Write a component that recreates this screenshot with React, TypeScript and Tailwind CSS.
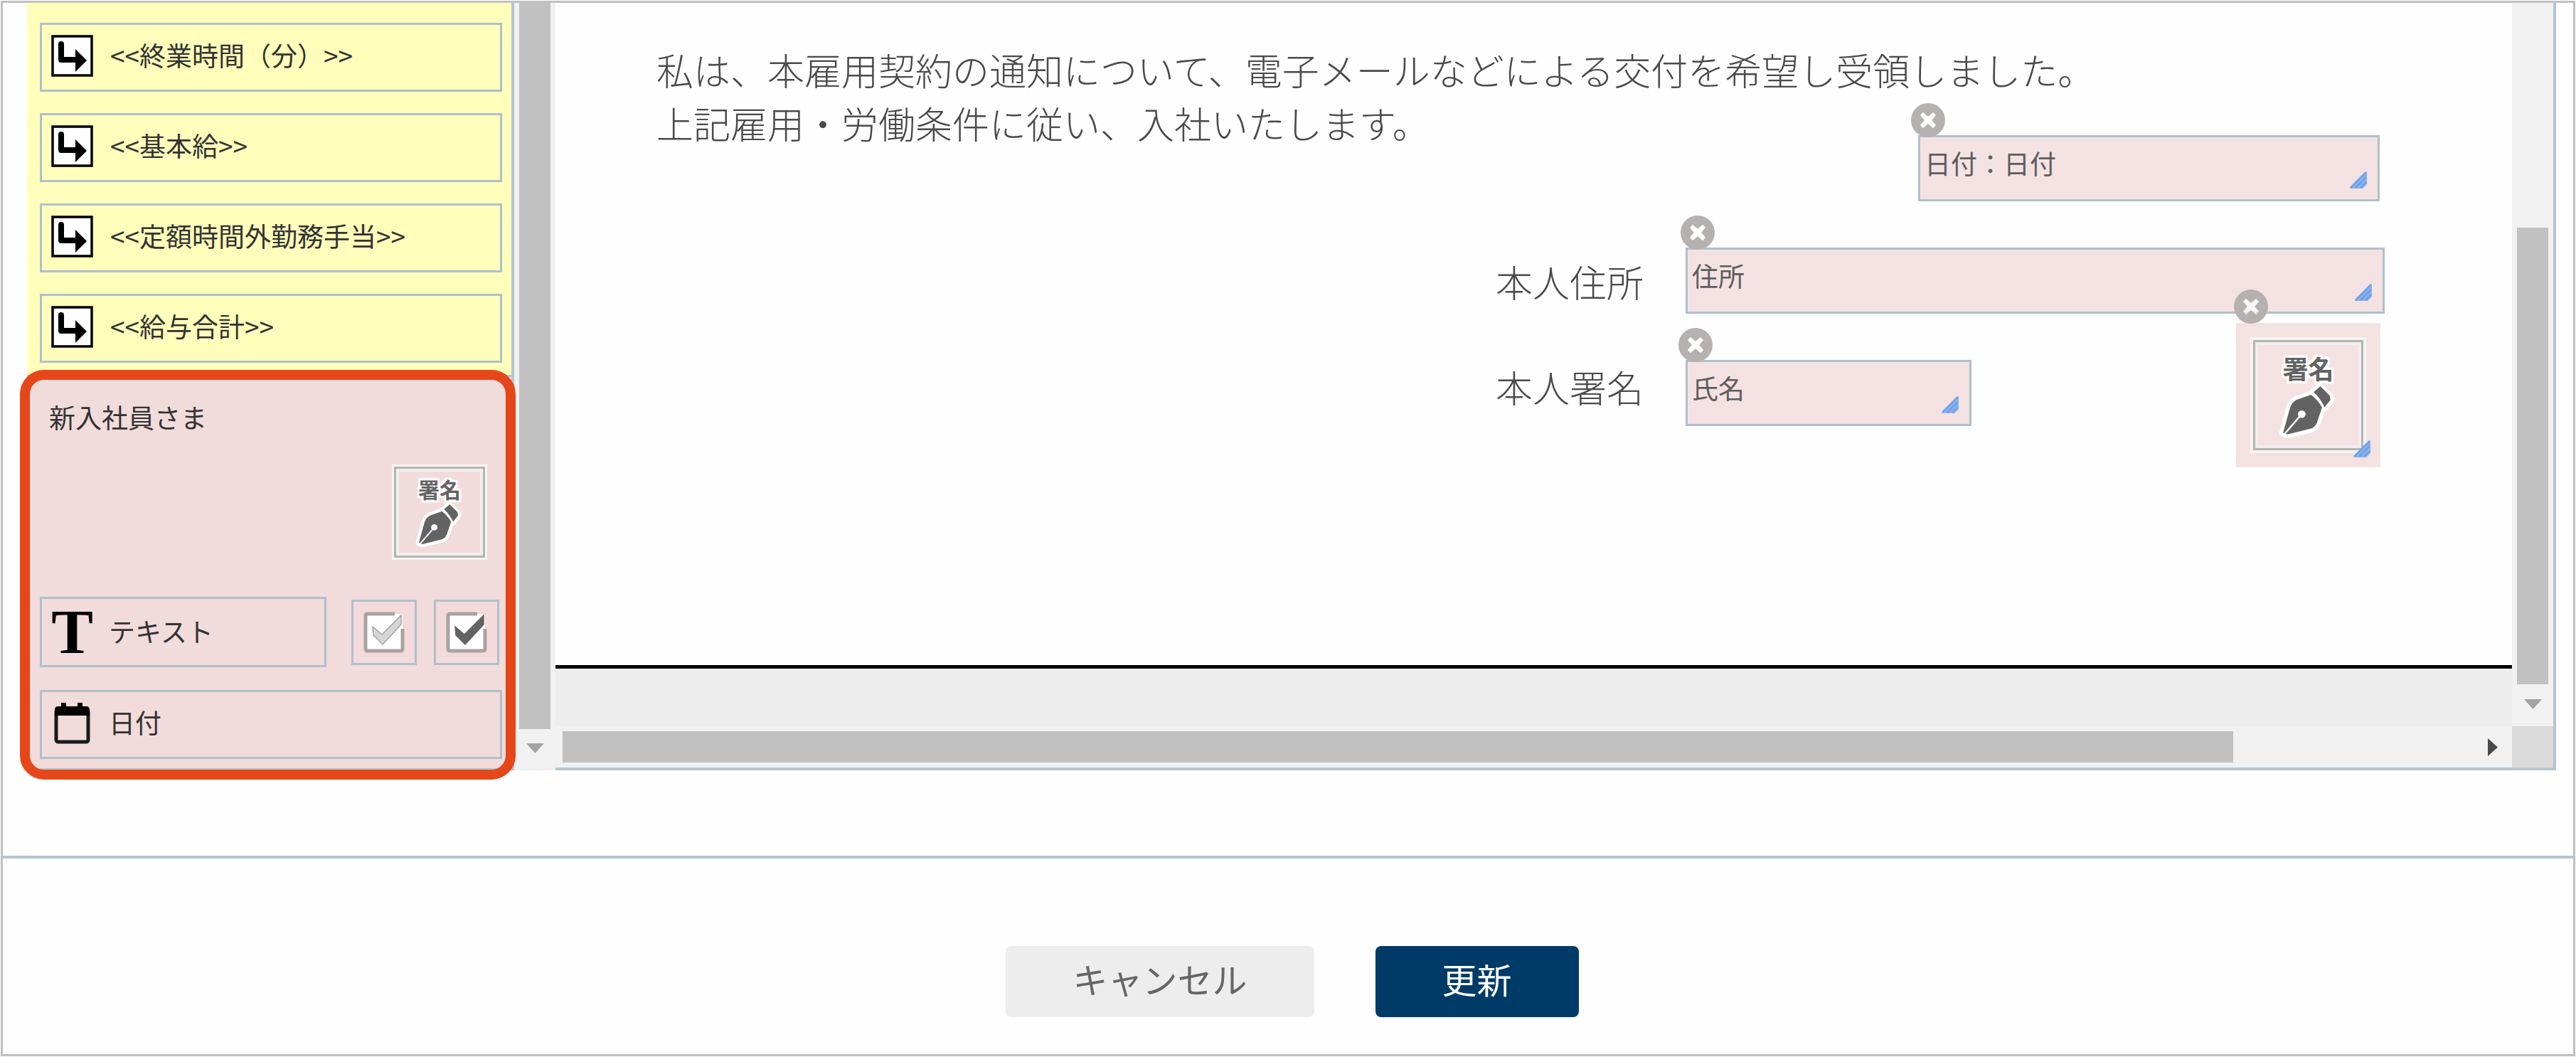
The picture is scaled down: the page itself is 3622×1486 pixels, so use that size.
import React from "react";

const insertFields = [
	"<<終業時間（分）>>",
	"<<基本給>>",
	"<<定額時間外勤務手当>>",
	"<<給与合計>>",
];

const InsertIcon: React.FC = () => (
	<svg className="h-[59px] w-[59px] shrink-0" viewBox="0 0 59 59">
		<rect x="2" y="2" width="55" height="55" fill="#fff" stroke="#000" strokeWidth="3.5" />
		<path d="M14 13V35H36" fill="none" stroke="#000" strokeWidth="8" strokeLinecap="round" strokeLinejoin="round" />
		<path d="M34 20L50 36L34 52Z" fill="#000" />
	</svg>
);

const CalendarIcon: React.FC = () => (
	<svg className="h-[59px] w-[59px] shrink-0" viewBox="0 0 59 59">
		<rect x="7" y="11" width="45" height="45" rx="3" fill="none" stroke="#1a1a1a" strokeWidth="5" />
		<path d="M5 19V11Q5 6 10 6H14V1H21V6H37V1H44V6H49Q54 6 54 11V19Z" fill="#000" />
	</svg>
);

const CheckIcon: React.FC<{ strong: boolean }> = ({ strong }) => (
	<svg className="h-[58px] w-[58px]" viewBox="0 0 58 58">
		<rect x="3" y="3" width="52" height="52" rx="2" fill="#fff" />
		<path d="M44 3H6Q3 3 3 6V52Q3 55 6 55H52Q55 55 55 52V24" fill="none" stroke="#a9a2a2" strokeWidth="5" />
		<path
			d="M13 21L26 32L53 5V18L27 46L14 33Z"
			fill={strong ? "#636363" : "#d6d6d6"}
			stroke={strong ? "#636363" : "#a3a3a3"}
			strokeWidth="1.5"
		/>
	</svg>
);

const PenIcon: React.FC<{ className: string }> = ({ className }) => (
	<svg className={`${className} overflow-visible`} viewBox="0 0 58 58">
		<g stroke="#fff" strokeWidth="9" strokeLinejoin="round" fill="#fff">
			<path d="M1 55L9 26Q11 19 17 16L34 10Q42 16 47 25L41 43Q39 48 34 50L6 57Z" />
			<path d="M37 7L44 1L56 12L57 16L50 25Q45 14 37 7Z" />
		</g>
		<g fill="#636363">
			<path d="M1 55L9 26Q11 19 17 16L34 10Q42 16 47 25L41 43Q39 48 34 50L6 57Z" />
			<path d="M37 7L45 0L56 11L57 16L50 25Q45 14 37 7Z" />
		</g>
		<circle cx="23" cy="33" r="4.5" fill="#fff" />
		<path d="M23 33L3 56" stroke="#fff" strokeWidth="2" />
	</svg>
);

// Signature stamp, used in the palette and on the page
const SignatureStamp: React.FC<{ large?: boolean }> = ({ large = false }) => {
	const frameClasses = large
		? "h-[155px] w-[155px] text-[36px] leading-[48px] pt-[12px] outline-4"
		: "h-[128px] w-[128px] text-[30px] leading-[40px] pt-[8px] outline-3";

	return (
		<span
			className={`${frameClasses} flex flex-col items-center gap-[2px] border-3 border-[#b4b4b4] font-bold text-[#636363] outline-[#f6f3f3] shadow-[inset_0_0_0_4px_#f3eeee] [text-shadow:0_0_4px_#fff,0_0_4px_#fff,3px_3px_2px_#fff,-3px_-3px_2px_#fff,3px_-3px_2px_#fff,-3px_3px_2px_#fff]`}
		>
			署名
			<PenIcon className={large ? "mr-1 h-[69px] w-[69px]" : "mr-1 h-[57px] w-[57px]"} />
		</span>
	);
};

const CloseButton: React.FC<{ className: string; label: string }> = ({ className, label }) => (
	<button type="button" aria-label={label} className={`absolute h-12 w-12 ${className}`}>
		<svg className="h-full w-full" viewBox="0 0 48 48">
			<path
				fillRule="evenodd"
				fill="#b5b1b1"
				d="M24 0A24 24 0 1 0 24 48A24 24 0 1 0 24 0ZM17 13L24 19L31 13L35 17L29 24L35 31L31 35L24 29L17 35L13 31L19 24L13 17Z"
			/>
			<path fill="#fff" fillOpacity="0.7" d="M17 13L24 19L31 13L35 17L29 24L35 31L31 35L24 29L17 35L13 31L19 24L13 17Z" />
		</svg>
	</button>
);

const ResizeHandle: React.FC<{ className: string }> = ({ className }) => (
	<svg className={`pointer-events-none absolute h-6 w-6 ${className}`} viewBox="0 0 24 24">
		<path d="M24 0V18L18 24H0Z" fill="#8fb3e8" />
		<path d="M1 23L23 1M8 23L23 8M15 23L23 15" stroke="#6ea3ec" strokeWidth="3" />
	</svg>
);

const PlacedField: React.FC<{
	id: string;
	value: string;
	className: string;
	closeClassName: string;
	label?: string;
}> = ({ id, value, className, closeClassName, label }) => (
	<div className={`absolute h-[93px] ${className}`}>
		<input
			id={id}
			type="text"
			defaultValue={value}
			aria-label={label}
			className="h-full w-full border-3 border-[#afc0cc] bg-[#f4e2e2] pb-4 pl-[6px] text-[37px] text-[#5e5e5e] outline-none"
		/>
		<ResizeHandle className="right-[18px] bottom-[18px]" />
		<CloseButton label={`${value}を削除`} className={closeClassName} />
	</div>
);

const Sidebar: React.FC = () => (
	<aside className="flex w-[685px] shrink-0 flex-col border-r-4 border-[#b4c5d2] text-[37px] leading-[56px] text-[#333]">
		<div className="flex flex-col gap-[30px] bg-[#ffffbb] px-[18px] pt-7 pb-[17px] pr-[13px]">
			{insertFields.map((field) => (
				<button
					key={field}
					type="button"
					className="flex h-[97px] items-center gap-6 border-3 border-[#afc0cc] px-[13px] pb-1 text-left"
				>
					<InsertIcon />
					<span className="pb-1">{field}</span>
				</button>
			))}
		</div>

		<div className="relative flex-1 border-y-3 border-[#b4c5d2] bg-[#f1dbdb] pt-7 pr-[13px] pb-[13px] pl-[18px]">
			<h2 className="pl-[13px]">新入社員さま</h2>
			<div className="mt-[42px] flex justify-end pr-6">
				<button type="button">
					<SignatureStamp />
				</button>
			</div>
			<div className="mt-[55px] flex items-center gap-6 pr-1">
				<button
					type="button"
					className="mr-[11px] flex h-[99px] flex-1 items-center gap-[22px] border-3 border-[#afc0cc] px-[13px] text-left"
				>
					<span className="w-[59px] text-center font-['Liberation_Serif',serif] text-[88px] leading-[59px] font-bold text-black">
						T
					</span>
					<span className="pb-1">テキスト</span>
				</button>
				<button
					type="button"
					aria-label="チェック（任意）"
					className="flex h-[92px] w-[92px] items-center justify-center border-3 border-[#afc0cc] bg-[#f4dada]"
				>
					<CheckIcon strong={false} />
				</button>
				<button
					type="button"
					aria-label="チェック"
					className="flex h-[92px] w-[92px] items-center justify-center border-3 border-[#afc0cc] bg-[#f4dada]"
				>
					<CheckIcon strong />
				</button>
			</div>
			<button
				type="button"
				className="mt-8 flex h-[97px] w-full items-center gap-[22px] border-3 border-[#afc0cc] px-[13px] pb-1 text-left"
			>
				<CalendarIcon />
				<span className="pb-1">日付</span>
			</button>

			{/* Highlight frame */}
			<div className="pointer-events-none absolute -top-[10px] -right-[6px] -bottom-4 -left-[10px] rounded-[34px] border-14 border-[#e6471a]" />
		</div>
	</aside>
);

const DocumentPage: React.FC = () => (
	<div className="relative h-[931px] bg-[#fefefe] pt-14 pl-[142px] text-[#4a4a4a]">
		<p className="text-[52px] leading-[75px] font-light whitespace-nowrap">
			私は、本雇用契約の通知について、電子メールなどによる交付を希望し受領しました。
			<br />
			上記雇用・労働条件に従い、入社いたします。
		</p>

		<label htmlFor="address" className="absolute top-[354px] left-[1322px] text-[52px] leading-[75px] font-light">
			本人住所
		</label>
		<label htmlFor="name" className="absolute top-[502px] left-[1322px] text-[52px] leading-[75px] font-light">
			本人署名
		</label>

		<PlacedField
			id="date"
			value="日付：日付"
			label="日付"
			className="top-[186px] left-[1916px] w-[649px]"
			closeClassName="-top-[45px] -left-[10px]"
		/>
		<PlacedField
			id="address"
			value="住所"
			className="top-[344px] left-[1589px] w-[983px]"
			closeClassName="-top-[45px] -left-[7px]"
		/>
		<PlacedField
			id="name"
			value="氏名"
			className="top-[502px] left-[1589px] w-[402px]"
			closeClassName="-top-[45px] -left-[10px]"
		/>

		<div className="absolute top-[450px] left-[2363px] flex h-[203px] w-[203px] items-center justify-center bg-[#f4e2e2]">
			<SignatureStamp large />
			<ResizeHandle className="right-[14px] bottom-[14px]" />
			<CloseButton label="署名を削除" className="-top-[47px] -left-[3px]" />
		</div>
	</div>
);

const App: React.FC = () => {
	return (
		<div className="bg-white p-px font-['Noto_Sans_CJK_JP',sans-serif]">
			<div className="border-3 border-[#c1c1c1] bg-[#fefefe]">
				<div className="flex pr-6 pl-[34px]">
					<Sidebar />

					{/* Sidebar scrollbar */}
					<div className="flex w-[58px] shrink-0 flex-col items-center bg-[#f1f1f1]">
						<div className="w-[44px] flex-1 bg-[#c1c1c1]" />
						<div className="flex h-[58px] items-center justify-center pb-1">
							<svg className="h-[14px] w-[25px]" viewBox="0 0 25 14">
								<path d="M0 0H25L12.5 14Z" fill="#a3a3a3" />
							</svg>
						</div>
					</div>

					<main className="flex min-w-0 flex-1 border-r-4 border-b-4 border-[#b4c5d2]">
						<div className="flex min-w-0 flex-1 flex-col">
							<DocumentPage />
							<div className="h-[86px] border-t-5 border-black bg-[#ededed]" />
							<div className="flex h-[58px] items-center bg-[#f1f1f1] pl-[10px]">
								<div className="h-[44px] w-6/7 bg-[#c1c1c1]" />
								<svg className="mr-5 ml-auto h-[25px] w-[14px]" viewBox="0 0 14 25">
									<path d="M0 0L14 12.5L0 25Z" fill="#484848" />
								</svg>
							</div>
						</div>
						<div className="flex w-[58px] shrink-0 flex-col">
							<div className="flex flex-1 flex-col items-center bg-[#f1f1f1] pt-[316px]">
								<div className="w-[44px] flex-1 bg-[#c1c1c1]" />
								<div className="flex h-[59px] items-center justify-center pb-1">
									<svg className="h-[14px] w-[25px]" viewBox="0 0 25 14">
										<path d="M0 0H25L12.5 14Z" fill="#a3a3a3" />
									</svg>
								</div>
							</div>
							<div className="h-[58px] bg-[#dadada]" />
						</div>
					</main>
				</div>

				<footer className="mt-[120px] flex justify-center gap-[86px] border-t-4 border-[#b4c5d2] pt-[123px] pb-[52px] pl-3 text-[49px] leading-[92px]">
					<button type="button" className="h-[100px] rounded-lg bg-[#ededed] px-[94px] pb-2 text-[#666]">
						キャンセル
					</button>
					<button type="button" className="h-[100px] rounded-lg bg-[#003b68] px-[94px] pb-2 text-white">
						更新
					</button>
				</footer>
			</div>
		</div>
	);
};

export default App;
